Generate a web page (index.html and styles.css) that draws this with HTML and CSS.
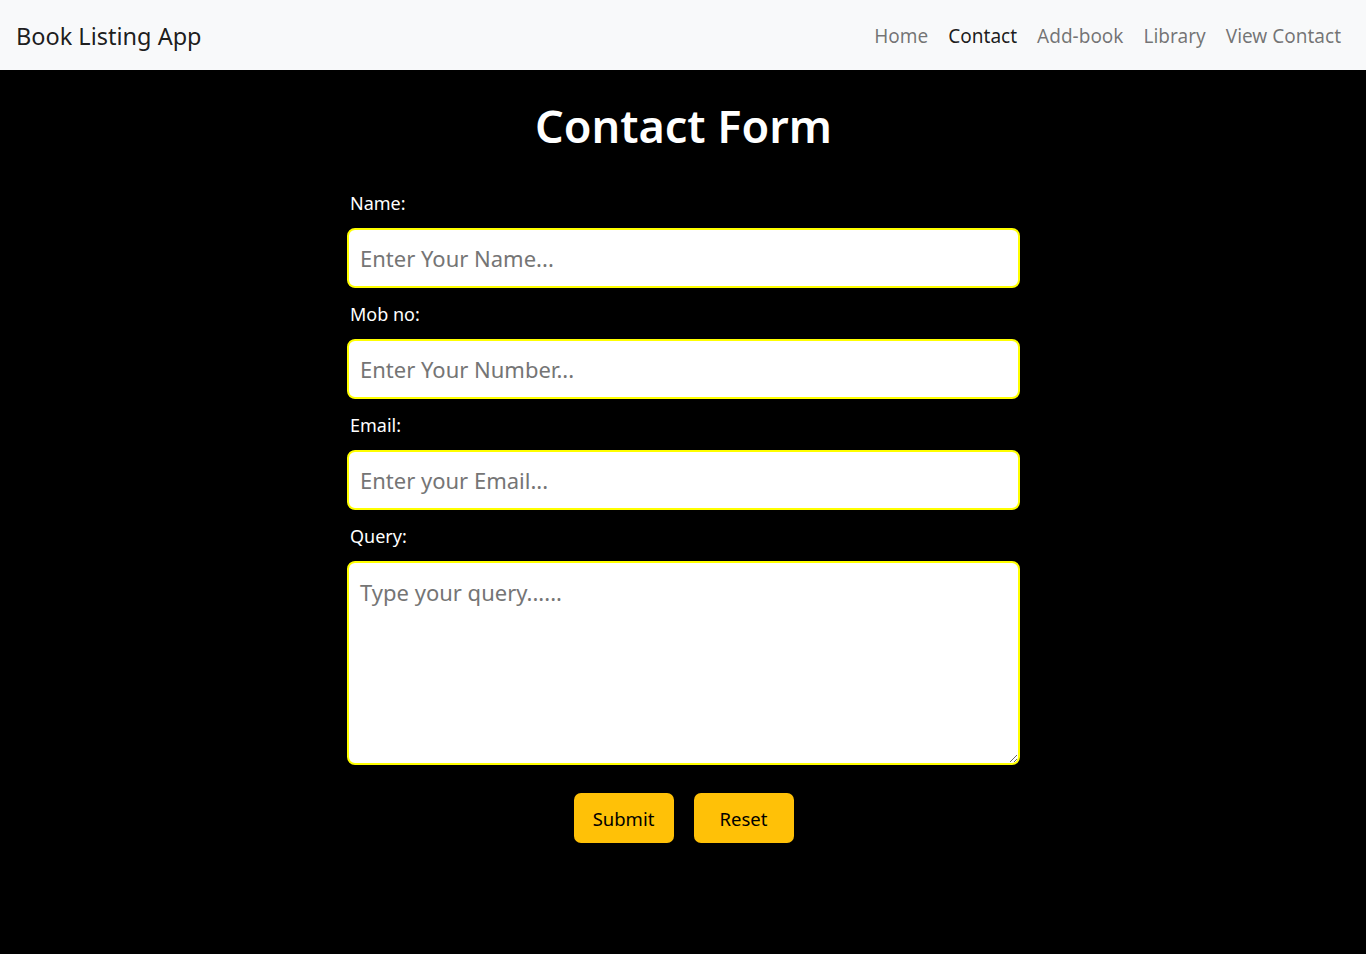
FILE: index.html
```html
<!DOCTYPE html>
<html lang="en">
<head>
<meta charset="utf-8">
<title>Book Listing App</title>
<link rel="stylesheet" href="styles.css">
</head>
<body>
<nav class="navbar">
  <a class="brand" href="#">Book Listing App</a>
  <ul class="nav">
    <li><a class="nav-link" href="#">Home</a></li>
    <li><a class="nav-link active" href="#">Contact</a></li>
    <li><a class="nav-link" href="#">Add-book</a></li>
    <li><a class="nav-link" href="#">Library</a></li>
    <li><a class="nav-link" href="#">View Contact</a></li>
  </ul>
</nav>
<main class="main">
  <h1 class="title">Contact Form</h1>
  <form class="form">
    <div class="group">
      <label class="label" for="name">Name:</label>
      <input class="control" id="name" type="text" placeholder="Enter Your Name...">
    </div>
    <div class="group">
      <label class="label" for="mob">Mob no:</label>
      <input class="control" id="mob" type="text" placeholder="Enter Your Number...">
    </div>
    <div class="group">
      <label class="label" for="email">Email:</label>
      <input class="control" id="email" type="email" placeholder="Enter your Email...">
    </div>
    <div class="group">
      <label class="label" for="query">Query:</label>
      <textarea class="control area" id="query" placeholder="Type your query......"></textarea>
    </div>
    <div class="actions">
      <button class="btn" type="submit">Submit</button>
      <button class="btn" type="reset">Reset</button>
    </div>
  </form>
</main>
</body>
</html>
```
FILE: styles.css
```css
* { box-sizing: border-box; }
html, body {
  margin: 0;
  padding: 0;
  background: #000;
  font-family: "Noto Sans", "Open Sans", sans-serif;
}
.navbar {
  height: 70px;
  background: #f8f9fa;
  display: flex;
  align-items: center;
  justify-content: space-between;
  padding: 2px 15px 0 16px;
}
.brand {
  font-size: 23.5px;
  color: rgba(0,0,0,0.9);
  text-decoration: none;
  line-height: 30px;
}
.nav {
  list-style: none;
  margin: 0;
  padding: 0;
  display: flex;
}
.nav-link {
  display: block;
  padding: 0 10px;
  font-size: 19px;
  line-height: 30px;
  color: rgba(0,0,0,0.55);
  text-decoration: none;
}
.nav-link.active { color: rgba(0,0,0,0.9); }
.main {
  padding: 26px 0 0 1px;
}
.title {
  margin: 0 0 32px;
  text-align: center;
  color: #fff;
  font-size: 45px;
  font-weight: 600;
  line-height: 60px;
}
.form {
  width: 673px;
  margin: 0 auto;
}
.group {
  margin-bottom: 11px;
}
.label {
  display: block;
  color: #fff;
  font-size: 18px;
  line-height: 30px;
  margin-bottom: 10px;
  padding-left: 3px;
}
.control {
  display: block;
  width: 100%;
  height: 60px;
  border: 2px solid #ffff00;
  border-radius: 8px;
  background: #fff;
  padding: 0 11px;
  font-family: inherit;
  font-size: 22px;
  color: #212529;
  outline: none;
}
.control::placeholder { color: #757575; }
.area {
  height: 204px;
  padding-top: 14px;
  resize: vertical;
}
.actions {
  display: flex;
  justify-content: center;
  gap: 20px;
  padding-top: 17px;
}
.btn {
  width: 100px;
  height: 50px;
  background: #ffc107;
  border: none;
  border-radius: 7px;
  font-family: inherit;
  font-size: 18.5px;
  color: #000;
}
```
